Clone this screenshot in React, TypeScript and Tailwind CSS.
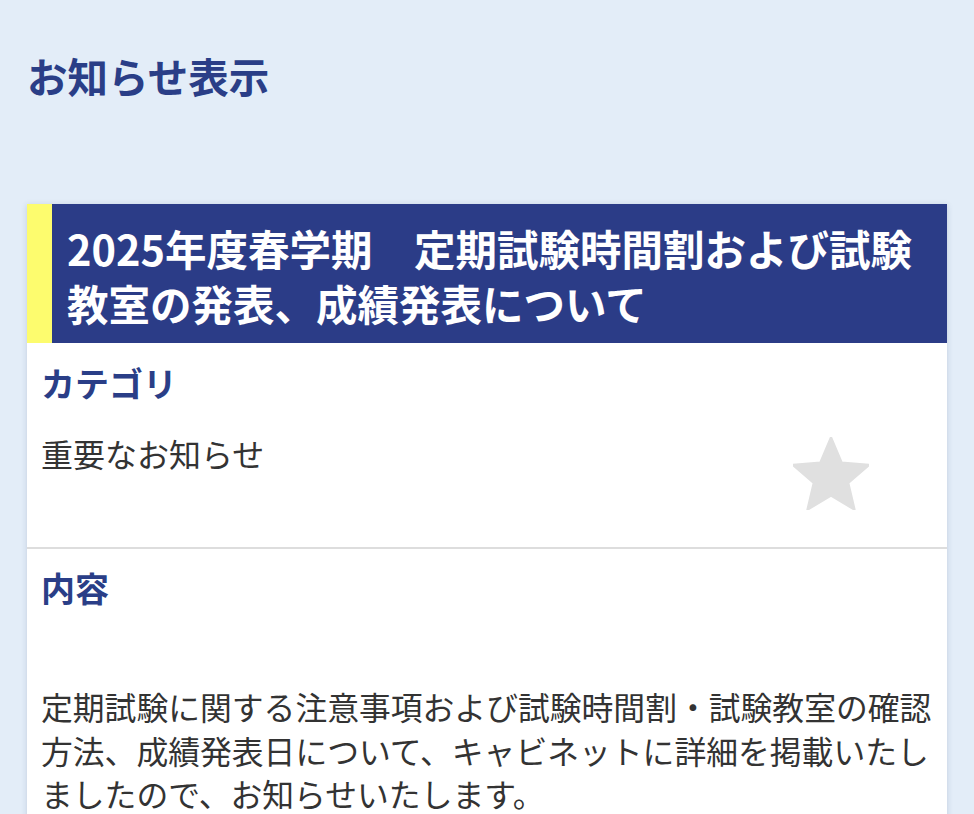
const FONT = { fontFamily: '"Noto Sans CJK JP", "Noto Sans", sans-serif' };

function StarIcon() {
  return (
    <svg width="76" height="73" viewBox="2 2 20 19" aria-hidden="true">
      <path
        d="M12 17.27L18.18 21l-1.64-7.03L22 9.24l-7.19-.61L12 2 9.19 8.63 2 9.24l5.46 4.73L5.82 21z"
        fill="#e0e0e0"
        stroke="#e0e0e0"
        strokeWidth="0.6"
        strokeLinejoin="round"
      />
    </svg>
  );
}

export default function App() {
  return (
    <div style={FONT} className="min-h-screen bg-[#e3edf8] px-[27px] pt-[51px]">
      <h1 className="text-[40.5px] leading-[49px] font-bold text-[#2a3e87]">
        お知らせ表示
      </h1>

      <div className="mt-[104px] w-[920px] bg-white shadow-[0_1px_6px_rgba(40,60,110,0.18)]">
        <div className="flex">
          <div className="w-[25px] shrink-0 bg-[#fdfc6e]" />
          <h2 className="flex-1 bg-[#2b3c87] pl-[15px] pr-[20px] pt-[17px] pb-[12px] text-[41.5px] leading-[55px] font-bold text-white">
            2025年度春学期　定期試験時間割および試験教室の発表、成績発表について
          </h2>
        </div>

        <section className="border-b-2 border-[#dddddd] px-[14px] pt-[18px] pb-[37px]">
          <h3 className="text-[34px] leading-[44px] font-bold text-[#2a3e87]">カテゴリ</h3>
          <div className="mt-[26px] flex items-start justify-between">
            <p className="text-[32px] leading-[44px] text-[#333333]">重要なお知らせ</p>
            <div className="mr-[64px] pt-[6px]">
              <StarIcon />
            </div>
          </div>
        </section>

        <section className="pl-[14px] pr-[8px] pt-[17px] pb-[12px]">
          <h3 className="text-[34px] leading-[44px] font-bold text-[#2a3e87]">内容</h3>
          <p className="mt-[75px] text-[31.8px] leading-[43.5px] text-[#333333]">
            定期試験に関する注意事項および試験時間割・試験教室の確認方法、成績発表日について、キャビネットに詳細を掲載いたしましたので、お知らせいたします。
          </p>
        </section>
      </div>
    </div>
  );
}
